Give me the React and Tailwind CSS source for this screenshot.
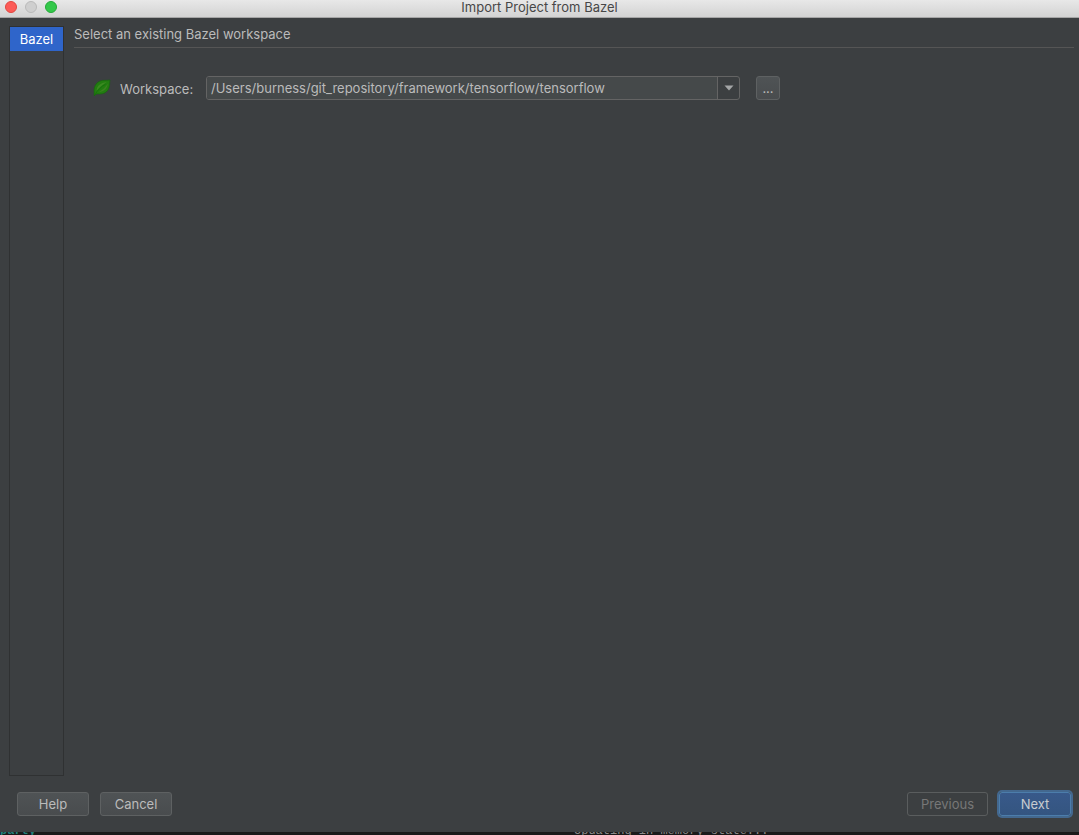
import { useState } from 'react';
import clsx from 'clsx';

const STEPS = ['Bazel'];
const RECENT = '/Users/burness/git_repository/framework/tensorflow/tensorflow';

function LeafIcon() {
  return (
    <svg viewBox="0 0 18 18" className="size-[18px] shrink-0" aria-hidden="true">
      <path
        d="M1.2 17 C1.4 14.6 0.8 12.6 1.1 10.3 C1.9 5 5 2 9.5 1.4 C12 1.1 14.5 1.6 17 1 C16.4 3.4 17 5.6 16 8.8 C14.5 13 11 15.2 6.6 15 C5.2 14.8 3.8 14.8 2.6 15.4 Z"
        fill="#227d10"
        stroke="#12690a"
        strokeWidth="0.6"
      />
      <path d="M3.6 11.8 C3.8 7 7.2 3.6 13.8 3.2 C10.4 5.2 6.8 7.6 3.6 11.8 Z" fill="#3c8a22" />
      <path d="M6 13 C11 12.8 14.2 9.8 14.8 4.8 C12.4 8.6 9.6 11 6 13 Z" fill="#3c8220" />
      <path d="M1.8 16 C4.6 11 8.2 7.6 12.6 5.2" fill="none" stroke="#14700b" strokeWidth="0.8" />
    </svg>
  );
}

function TitleBar({ title }) {
  return (
    <header className="relative flex h-[18px] items-start border-b border-[#a6a6a6] bg-linear-to-b from-[#e8e8e8] to-[#d3d3d3]">
      <div className="flex gap-2 pt-px pl-[5px]">
        <button type="button" aria-label="Close" className="size-3 rounded-full border border-[#e2463f] bg-[#fc5b57]" />
        <button type="button" aria-label="Minimize" disabled className="size-3 rounded-full border border-[#bababa] bg-[#cfcfcf]" />
        <button type="button" aria-label="Zoom" className="size-3 rounded-full border border-[#24a938] bg-[#34c84a]" />
      </div>
      <h1 className="pointer-events-none absolute inset-x-0 top-0 text-center leading-[14px] text-[#474747]">{title}</h1>
    </header>
  );
}

function DialogButton({ className, ...props }) {
  return (
    <button
      type="button"
      className={clsx(
        'h-6 rounded-[3px] border border-[#5e6162] bg-linear-to-b from-[#4f5355] to-[#494c4e] leading-5 text-[#bbbbbb]',
        'disabled:border-[#5a5d5e] disabled:bg-none disabled:text-[#777777]',
        className,
      )}
      {...props}
    />
  );
}

export default function App() {
  const [workspace, setWorkspace] = useState(RECENT);

  return (
    <div className="flex min-h-screen flex-col bg-[#1a1a1a] font-['Inter','Open_Sans',sans-serif] text-[13px]">
      <div className="flex grow flex-col bg-[#3c3f41] text-[#bbbbbb]">
        <TitleBar title="Import Project from Bazel" />

        <div className="flex grow pt-2 pr-[5px] pl-[9px]">
          <ul className="w-[55px] shrink-0 border border-[#2f3132]">
            {STEPS.map((step) => (
              <li key={step} className="bg-[#2f65ca] text-center leading-6 text-white">
                {step}
              </li>
            ))}
          </ul>

          <main className="ml-[10px] grow">
            <h2 className="border-b border-[#555555] pb-1 leading-[17px]">Select an existing Bazel workspace</h2>
            <div className="mt-7 flex items-center pl-[19px]">
              <LeafIcon />
              <label htmlFor="workspace" className="ml-[9px] w-[86px] pt-px leading-5">Workspace:</label>
              <div className="flex h-6 w-1/2 max-w-[534px] grow rounded-[3px] border border-[#646464]">
                <input
                  id="workspace"
                  type="text"
                  value={workspace}
                  onChange={(e) => setWorkspace(e.target.value)}
                  className="min-w-0 grow rounded-l-[2px] bg-[#45494a] px-1 pt-px outline-none"
                />
                <button
                  type="button"
                  aria-label="Show recent workspaces"
                  className="flex w-[22px] items-center justify-center border-l border-[#646464]"
                >
                  <svg viewBox="0 0 10 6" className="h-[6px] w-[10px]" aria-hidden="true">
                    <path d="M0.5 0.5 H9.5 L5 5.5 Z" fill="#a4a6a7" />
                  </svg>
                </button>
              </div>
              <DialogButton className="ml-4 w-6" aria-label="Browse">...</DialogButton>
            </div>
          </main>
        </div>

        <footer className="flex justify-between pt-4 pr-2 pb-4 pl-[17px]">
          <div className="flex gap-[11px]">
            <DialogButton className="w-[72px]">Help</DialogButton>
            <DialogButton className="w-[72px]">Cancel</DialogButton>
          </div>
          <div className="flex gap-[11px]">
            <DialogButton className="w-[81px]" disabled>Previous</DialogButton>
            <button
              type="button"
              className="h-6 w-[72px] rounded-[3px] border border-[#4c7dab] bg-linear-to-b from-[#38598a] to-[#345580] leading-5 text-[#c8ccd0] ring-2 ring-[#43688f]"
            >
              Next
            </button>
          </div>
        </footer>
      </div>

      <div className="flex h-[3px] items-end overflow-hidden font-['Liberation_Mono',monospace] text-xs leading-2">
        <span className="w-[574px] shrink-0 font-bold text-[#22807a]">party</span>
        <span className="whitespace-nowrap text-[#8a8a8a]">Updating in memory state...</span>
      </div>
    </div>
  );
}
